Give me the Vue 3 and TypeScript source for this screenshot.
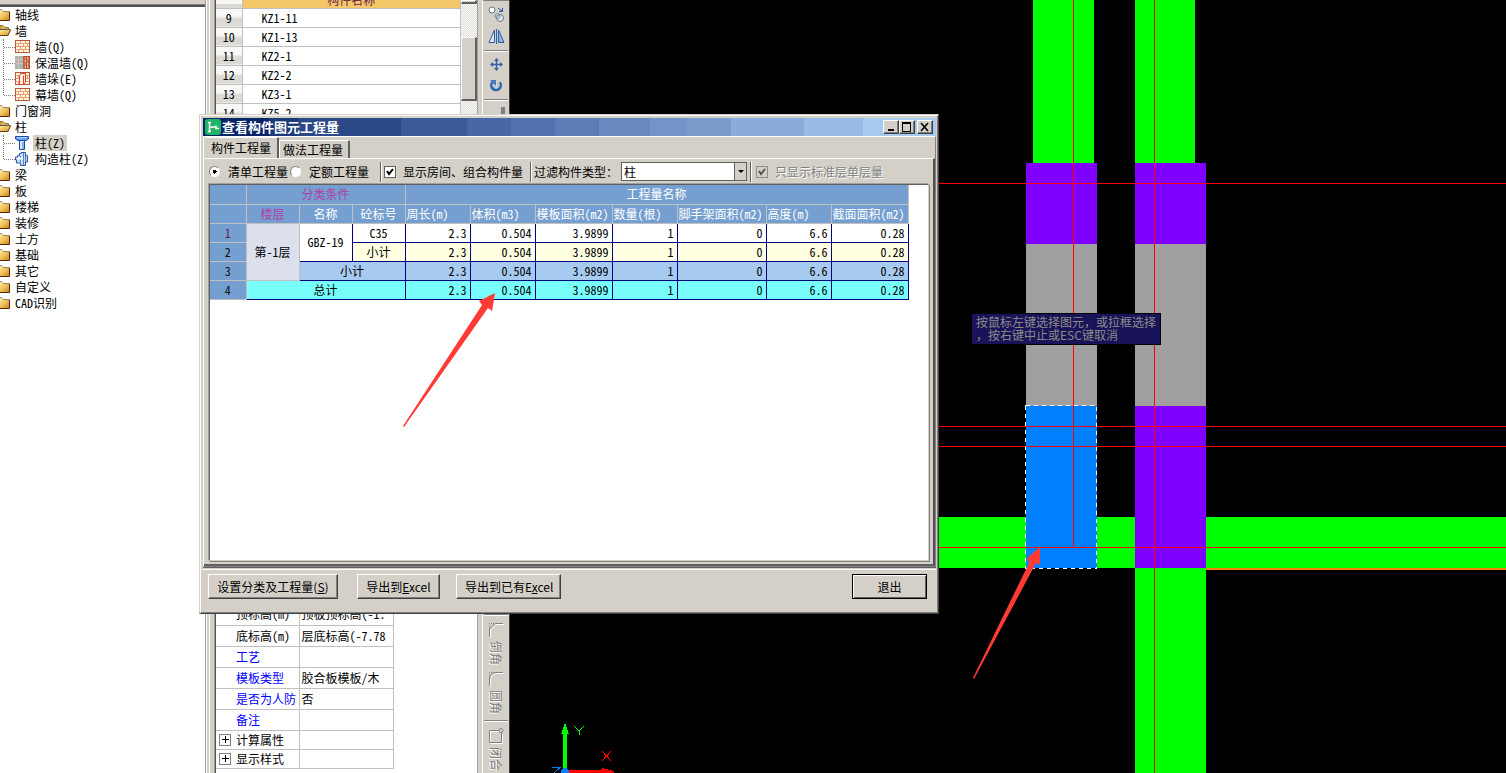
<script setup lang="ts">
interface TreeNode {
  label: string
  open?: boolean
  children?: { label: string; icon: string; selected?: boolean }[]
}

const tree: TreeNode[] = [
  { label: '轴线' },
  {
    label: '墙',
    open: true,
    children: [
      { label: '墙(Q)', icon: 'brick' },
      { label: '保温墙(Q)', icon: 'insulated' },
      { label: '墙垛(E)', icon: 'pier' },
      { label: '幕墙(Q)', icon: 'brick' },
    ],
  },
  { label: '门窗洞' },
  {
    label: '柱',
    open: true,
    children: [
      { label: '柱(Z)', icon: 'column', selected: true },
      { label: '构造柱(Z)', icon: 'tie' },
    ],
  },
  { label: '梁' },
  { label: '板' },
  { label: '楼梯' },
  { label: '装修' },
  { label: '土方' },
  { label: '基础' },
  { label: '其它' },
  { label: '自定义' },
  { label: 'CAD识别' },
]

const components = [
  { no: 9, name: 'KZ1-11' },
  { no: 10, name: 'KZ1-13' },
  { no: 11, name: 'KZ2-1' },
  { no: 12, name: 'KZ2-2' },
  { no: 13, name: 'KZ3-1' },
  { no: 14, name: 'KZ5-2' },
]

const props = [
  { name: '顶标高(m)', value: '顶板顶标高(-1.' },
  { name: '底标高(m)', value: '层底标高(-7.78' },
  { name: '工艺', value: '', blue: true },
  { name: '模板类型', value: '胶合板模板/木', blue: true },
  { name: '是否为人防', value: '否', blue: true },
  { name: '备注', value: '', blue: true },
  { name: '计算属性', value: '', group: true },
  { name: '显示样式', value: '', group: true },
]

const measures = ['周长(m)', '体积(m3)', '模板面积(m2)', '数量(根)', '脚手架面积(m2)', '高度(m)', '截面面积(m2)']
const values = ['2.3', '0.504', '3.9899', '1', '0', '6.6', '0.28']
const colWidths = [36, 53, 53, 53, 65, 65, 77, 65, 89, 65, 77]
</script>

<template>
  <div class="app">
    <aside class="tree">
      <div class="tree-cap"></div>
      <ul class="nodes">
        <li v-for="node in tree" :key="node.label">
          <div class="node">
            <svg class="folder" width="11" height="14" viewBox="0 0 11 14">
              <defs>
                <linearGradient id="gold" x1="0" y1="0" x2="1" y2="1">
                  <stop offset="0" stop-color="#fff0a0" />
                  <stop offset=".5" stop-color="#f0c058" />
                  <stop offset="1" stop-color="#c88020" />
                </linearGradient>
              </defs>
              <template v-if="node.open">
                <path d="M0 1.500H3L5 3.500H8.500V6H0Z" fill="#e0b050" stroke="#907840" />
                <path d="M0 5.500H11L8 11.500H0Z" fill="url(#gold)" />
                <path d="M0 5.500H10.500" stroke="#585858" />
                <path d="M10.500 6L8 11.500H0" fill="none" stroke="#604010" />
              </template>
              <template v-else>
                <path d="M0 1.500L2 3.500H10V12H0Z" fill="url(#gold)" />
                <path d="M0 1.500H1.500L3 3.500H9.500" fill="none" stroke="#908060" />
                <path d="M9.500 4V12.500H0" fill="none" stroke="#502808" />
              </template>
            </svg>
            <span>{{ node.label }}</span>
          </div>
          <ul v-if="node.children" class="children">
            <li v-for="child in node.children" :key="child.label" class="child">
              <svg width="16" height="14" viewBox="0 0 16 14">
                <g v-if="child.icon === 'column'">
                  <path d="M.5 .5H13.500V3L11 4.500H3L.5 3Z" fill="#6aa0f0" stroke="#1848a0" />
                  <path d="M4.500 4.500H9.500V13.500H4.500Z" fill="#d8ecff" stroke="#1848a0" />
                  <path d="M8 6V13" stroke="#3878d8" />
                  <path d="M2 1.500H12" stroke="#b0d0ff" />
                </g>
                <g v-else-if="child.icon === 'tie'">
                  <path d="M4.500 1.500H6V.5H10.500V3.500H12.500V10H10.500V13.500H5.500V11H1.500V8H.5V5H2.500V3.500H4.500Z" fill="#c8dcf8" stroke="#2858a8" />
                  <path d="M8.500 1V13M10.500 4V10M5.500 4V10" stroke="#5080c8" />
                  <path d="M3 6.500H8" stroke="#fff" stroke-width="2" />
                </g>
                <g v-else>
                  <rect x=".5" y=".5" width="14" height="12" fill="#fff4e0" stroke="#b85838" />
                  <path d="M1 3.500H14M1 6.500H14M1 9.500H14M5.500 1V3M10.500 1V3M3.500 4V6M8.500 4V6M12.500 4V6M5.500 7V9M10.500 7V9M3.500 10V12M8.500 10V12" stroke="#e8a070" />
                  <g v-if="child.icon === 'insulated'">
                    <rect width="9" height="13" fill="#a8b4b8" />
                    <path d="M0 3.500H8M0 7.500H8M3.500 0V12" stroke="#e8c0b0" />
                    <path d="M9 0V13M11.500 0V13M14 0V13" stroke="#b84828" stroke-width="1.500" />
                  </g>
                  <path v-if="child.icon === 'pier'" d="M4.500 3.500L6 1.500H10.500V10.500L8.500 12.500H4.500ZM8.500 3.500V12" fill="#fff0e8" stroke="#e04020" />
                </g>
              </svg>
              <span :class="{ selected: child.selected }">{{ child.label }}</span>
            </li>
          </ul>
        </li>
      </ul>
    </aside>
    <div class="splitter"></div>

    <main class="middle">
      <section class="list">
        <div class="list-rows">
          <table class="comp">
            <thead>
              <tr><th class="no"></th><th class="comp-title">构件名称</th></tr>
            </thead>
            <tbody>
              <tr v-for="c in components" :key="c.no">
                <th class="no" scope="row">{{ c.no }}</th>
                <td>{{ c.name }}</td>
              </tr>
            </tbody>
          </table>
        </div>
        <div class="scroll">
          <div class="scroll-up"></div>
          <div class="scroll-thumb"></div>
        </div>
      </section>
      <table class="props">
        <tbody>
          <tr v-for="p in props" :key="p.name" :class="{ group: p.group }">
            <th scope="row" :class="{ blue: p.blue }">
              <button v-if="p.group" class="expand" :aria-label="p.name">
                <svg width="7" height="7" viewBox="0 0 7 7"><path d="M0 3.500H7M3.500 0V7" stroke="#000" /></svg>
              </button>{{ p.name }}
            </th>
            <td>{{ p.value }}</td>
          </tr>
        </tbody>
      </table>
    </main>

    <nav class="tools">
      <div class="tools-top">
        <button aria-label="复制">
          <svg width="17" height="17" viewBox="0 0 17 17" fill="none">
            <circle cx="4" cy="4" r="3" stroke="#6a7888" fill="#fff" />
            <circle cx="12" cy="12" r="3.500" stroke="#6a7888" fill="#dde6f0" />
            <circle cx="9.500" cy="10" r="2.500" stroke="#7a8898" />
            <path d="M10 2L14 5M14.500 2V5.500H11" stroke="#2850a0" />
          </svg>
        </button>
        <button aria-label="镜像">
          <svg width="17" height="15" viewBox="0 0 17 15" fill="none" stroke="#2c5ca0">
            <path d="M6.500 1V13.500H1Z" fill="#d8e8f8" /><path d="M10.500 1V13.500H16Z" fill="#8cb4e0" /><path d="M8.500 0V15" />
          </svg>
        </button>
        <hr>
        <button aria-label="移动">
          <svg width="13" height="13" viewBox="0 0 13 13">
            <path d="M6.500 2V11M2 6.500H11" stroke="#3460a8" stroke-width="1.500" />
            <path d="M6.500 0L9 3H4ZM6.500 13L9 10H4ZM0 6.500L3 4V9ZM13 6.500L10 4V9Z" fill="#3460a8" />
          </svg>
        </button>
        <button aria-label="旋转">
          <svg width="14" height="16" viewBox="0 -2 14 16" fill="none">
            <path d="M3.500 3.500A4.500 4.500 0 1 0 10.500 3.500" stroke="#2c60b0" stroke-width="3" />
            <path d="M4 4.500A3.500 3.500 0 1 0 10 4" stroke="#90bcf0" />
            <path d="M1 1H7V7Z" fill="#4878c0" />
          </svg>
        </button>
        <hr>
        <i class="stub"></i>
      </div>
      <div class="tools-bottom">
        <hr>
        <button>
          <svg width="16" height="16" viewBox="0 0 16 16" fill="none">
            <path d="M2.500 16V8L8 2.500H16" stroke="#fff" /><path d="M1.500 15V7L7 1.500H15" stroke="#808080" /><path d="M1.500 6V1.500H7" stroke="#808080" stroke-dasharray="1 1" />
          </svg>
          <span>倒角</span>
        </button>
        <button>
          <svg width="16" height="16" viewBox="0 0 16 16" fill="none">
            <path d="M2.500 16V9Q3 3 9 2.500H16" stroke="#fff" /><path d="M1.500 15V8Q2 2 8 1.500H15" stroke="#808080" /><path d="M1.500 6V1.500H7" stroke="#808080" stroke-dasharray="1 1" />
          </svg>
          <span>圆角</span>
        </button>
        <hr>
        <button>
          <svg width="16" height="16" viewBox="0 0 16 16" fill="none">
            <path d="M12 3.500H2.500V15.500H14.500V6" stroke="#fff" /><path d="M11 2.500H1.500V14.500H13.500V5" stroke="#808080" /><circle cx="13" cy="2.500" r="2" stroke="#808080" />
          </svg>
          <span>闭合</span>
        </button>
      </div>
    </nav>

    <section class="canvas">
      <svg class="drawing" width="100%" height="100%">
        <g transform="translate(-510 0)" shape-rendering="crispEdges">
          <g fill="#00ff00">
            <rect x="1033" y="0" width="61" height="163" />
            <rect x="1135" y="0" width="60" height="163" />
            <rect x="510" y="517" width="100%" height="51" />
            <rect x="1135" y="568" width="71" height="100%" />
          </g>
          <rect x="1206" y="568" width="100%" height="2" fill="#ff8000" />
          <rect x="1026" y="163" width="71" height="81" fill="#8000ff" />
          <rect x="1135" y="163" width="71" height="81" fill="#8000ff" />
          <rect x="1026" y="244" width="71" height="162" fill="#a0a0a0" />
          <rect x="1135" y="244" width="71" height="162" fill="#a0a0a0" />
          <rect x="1026" y="406" width="71" height="162" fill="#0080ff" />
          <rect x="1135" y="406" width="71" height="162" fill="#8000ff" />
          <g fill="#ff0000">
            <rect x="510" y="183" width="100%" height="1" />
            <rect x="510" y="426" width="100%" height="1" />
            <rect x="510" y="446" width="100%" height="1" />
            <rect x="510" y="547" width="100%" height="1" />
            <rect x="1073" y="0" width="1" height="548" />
            <rect x="1154" y="0" width="1" height="100%" />
          </g>
          <path d="M1025.500 405.500H1096.500V568.500H1025.500Z" fill="none" stroke="#fff" stroke-dasharray="4 4" />
          <path d="M563 734H567V770H563ZM565 723L569 734H561Z" fill="#00ff00" />
          <path d="M567 770H602V768L614 771V773H567Z" fill="#ff0000" />
          <path d="M563 768H567L569 771V773H561V771Z" fill="#0080ff" />
          <path d="M574 726L579 731L584 726M579 731V735" fill="none" stroke="#00ff00" />
          <path d="M602 751L611 761M611 751L602 761" fill="none" stroke="#ff0000" />
          <path d="M552 767.500H560L554 773" fill="none" stroke="#0080ff" />
        </g>
      </svg>
    </section>

    <div class="hint">按鼠标左键选择图元，或拉框选择<br>，按右键中止或ESC键取消</div>

    <div class="dialog" role="dialog" aria-labelledby="dialog-title">
      <header class="titlebar">
        <svg class="logo" width="16" height="16" viewBox="0 0 16 16">
          <rect width="16" height="16" rx="3" fill="#20b464" />
          <path d="M3 3.500H6M3 12.500H6M4.500 3V13M4.500 8H11M11 6.500V9.500H14" fill="none" stroke="#fff" stroke-width="1.500" />
        </svg>
        <h1 id="dialog-title">查看构件图元工程量</h1>
        <div class="winbtns">
          <button aria-label="最小化"><svg width="12" height="10" viewBox="0 0 12 10"><path d="M3 8H9" stroke="#000" stroke-width="2" /></svg></button>
          <button aria-label="最大化"><svg width="12" height="10" viewBox="0 0 12 10"><path d="M1.500 1V9.500H9.500V1" fill="none" stroke="#000" /><path d="M1 1H10" stroke="#000" stroke-width="2" /></svg></button>
          <button class="close" aria-label="关闭"><svg width="12" height="10" viewBox="0 0 12 10"><path d="M2 1L9 9M9 1L2 9" stroke="#000" stroke-width="1.500" /></svg></button>
        </div>
      </header>

      <div class="body">
        <div class="tabs" role="tablist">
          <button class="tab active" role="tab" aria-selected="true">构件工程量</button>
          <button class="tab" role="tab" aria-selected="false">做法工程量</button>
        </div>
        <div class="page">
          <div class="filters">
            <label class="opt"><input type="radio" name="kind" checked><span>清单工程量</span></label>
            <label class="opt"><input type="radio" name="kind"><span>定额工程量</span></label>
            <i class="sep"></i>
            <label class="opt"><input type="checkbox" checked><span>显示房间、组合构件量</span></label>
            <i class="sep near"></i>
            <label for="ctype">过滤构件类型：</label>
            <div class="select">
              <select id="ctype"><option>柱</option></select>
              <i class="drop"></i>
            </div>
            <i class="sep"></i>
            <label class="opt disabled"><input type="checkbox" checked disabled><span>只显示标准层单层量</span></label>
          </div>

          <div class="grid">
            <table class="data">
              <colgroup>
                <col v-for="(w, i) in colWidths" :key="i" :style="{ width: w + 'px' }">
              </colgroup>
              <thead>
                <tr><th></th><th colspan="3" class="pink">分类条件</th><th colspan="7">工程量名称</th></tr>
                <tr>
                  <th></th><th class="pink">楼层</th><th>名称</th><th>砼标号</th>
                  <th v-for="m in measures" :key="m" class="left">{{ m }}</th>
                </tr>
              </thead>
              <tbody>
                <tr>
                  <th scope="row" class="current">1</th>
                  <td rowspan="3" class="floor">第-1层</td>
                  <td rowspan="2">GBZ-19</td>
                  <td>C35</td>
                  <td v-for="v in values" :key="v" class="num">{{ v }}</td>
                </tr>
                <tr class="sub">
                  <th scope="row">2</th>
                  <td>小计</td>
                  <td v-for="v in values" :key="v" class="num">{{ v }}</td>
                </tr>
                <tr class="sum">
                  <th scope="row">3</th>
                  <td colspan="2">小计</td>
                  <td v-for="v in values" :key="v" class="num">{{ v }}</td>
                </tr>
                <tr class="total">
                  <th scope="row">4</th>
                  <td colspan="3">总计</td>
                  <td v-for="v in values" :key="v" class="num">{{ v }}</td>
                </tr>
              </tbody>
            </table>
          </div>
        </div>
      </div>

      <footer class="actions">
        <button>设置分类及工程量(<u>S</u>)</button>
        <button>导出到<u>E</u>xcel</button>
        <button>导出到已有E<u>x</u>cel</button>
        <button class="exit">退出</button>
      </footer>
    </div>

    <svg class="marks" width="100%" height="100%" fill="#ff3b36">
      <path d="M403 426L482 305L479 301L495 293L492 311L488 308L404 427Z" />
      <path d="M973 678L1029 563L1027 558L1040 547V565L1036 563L974 679Z" />
    </svg>
  </div>
</template>

<style>
html,
body {
  margin: 0;
  overflow: hidden;
}
</style>

<style scoped>
.app {
  --face: #d4d0c8;
  position: relative;
  display: flex;
  height: 100vh;
  overflow: hidden;
  background: #fff;
  color: #000;
  font-family: "Noto Sans Mono CJK SC", "Noto Sans CJK SC", sans-serif;
  font-size: 12px;
  line-height: 16px;
}
.app * { box-sizing: border-box; }
button, select, input { font: inherit; color: inherit; margin: 0; }
button { padding: 0; border: 0; background: none; white-space: nowrap; }
svg { display: block; }
ul { list-style: none; margin: 0; padding: 0; }
table { border-collapse: collapse; table-layout: fixed; }
th { font-weight: normal; }
th, td { padding: 0; white-space: nowrap; overflow: hidden; }

/* navigation tree */
.tree { flex: 0 0 205px; overflow: hidden; }
.tree-cap { height: 7px; background: var(--face); border-bottom: 2px solid #505050; box-shadow: inset 0 -1px #808080; }
.node { display: flex; align-items: center; gap: 4px; height: 16px; }
.children { position: relative; }
.children::before {
  content: "";
  position: absolute;
  left: 3px;
  top: 0;
  bottom: 8px;
  border-left: 1px dotted #808080;
}
.child { display: flex; align-items: center; height: 16px; padding-left: 4px; }
.child::before { content: ""; width: 11px; border-top: 1px dotted #808080; }
.child svg { margin-right: 2px; }
.child span { padding: 0 2px; height: 16px; }
.child .selected { background: var(--face); }
.splitter {
  flex: 0 0 11px;
  border-left: 1px solid #a0a0a0;
  border-right: 1px solid #505050;
  background: linear-gradient(90deg, #fff 0 1px, var(--face) 1px 3px, #fff 3px 4px, var(--face) 4px 8px, #a0a0a0 8px);
}

/* component list and properties */
.middle { flex: 0 0 267px; display: flex; flex-direction: column; border-right: 1px solid #fff; box-shadow: inset -4px 0 var(--face), inset -5px 0 #a0a0a0; }
.list { flex: 0 0 604px; display: flex; overflow: hidden; }
.list-rows { flex: 0 0 245px; }
.comp { width: 100%; }
.comp tr { height: 19px; }
.comp thead tr { height: 8px; }
.comp thead th { height: 8px; padding: 0; }
.comp td, .comp th { border-right: 1px solid #c0c0c0; border-bottom: 1px solid #c0c0c0; height: 19px; }
.comp td { padding-left: 19px; padding-top: 1px; }
.comp .no { width: 26px; background: linear-gradient(#f8f8f6 0 45%, #dcdad4 55% 100%); }
.comp .comp-title { background: #f4c868; color: #6a1848; line-height: 0; vertical-align: top; }
.scroll { flex: 0 0 16px; background: repeating-conic-gradient(#fff 0 25%, #dedbd5 0 50%) 0 0 / 2px 2px; display: flex; flex-direction: column; gap: 33px; }
.scroll-up, .scroll-thumb { background: var(--face); border: 1px solid #fff; border-right: 2px solid #606060; border-bottom: 2px solid #606060; }
.scroll-up { height: 4px; }
.scroll-thumb { height: 64px; }
.props { width: 177px; }
.props tr { height: 21px; }
.props tr.group { height: 19px; }
.props th, .props td { border-right: 1px solid #c0c0c0; border-bottom: 1px solid #c0c0c0; text-align: left; line-height: 16px; }
.props th { width: 83px; padding-left: 20px; position: relative; }
.props td { width: 94px; padding-left: 2px; }
.props .blue { color: #0000ff; }
.expand { position: absolute; left: 3px; top: 3px; width: 12px; height: 12px; border: 1px solid #808080; display: grid; place-items: center; }

/* vertical toolbar */
.tools { flex: 0 0 27px; display: flex; flex-direction: column; background: var(--face); border-right: 1px solid #404040; }
.tools-top { flex: 0 0 614px; display: flex; flex-direction: column; align-items: center; gap: 6px; padding-top: 5px; border-top: 1px solid #808080; }
.tools hr { width: 24px; margin: 0; border: 0; border-top: 1px solid #808080; border-bottom: 1px solid #fff; }
.stub { width: 4px; height: 8px; background: #808080; align-self: flex-end; margin-right: 4px; }
.tools-bottom { display: flex; flex-direction: column; align-items: center; gap: 6px; }
.tools-bottom button { display: flex; flex-direction: column; align-items: center; gap: 3px; color: #808080; text-shadow: 1px 1px #fff; }
.tools-bottom button span { writing-mode: vertical-rl; text-orientation: sideways; line-height: 15px; }

/* drawing area */
.canvas { flex: 1; min-width: 0; background: #000; }
.hint {
  position: absolute;
  left: 972px;
  top: 313px;
  padding: 1px 4px 3px;
  background: #19145a;
  border: 0 solid #000;
  border-width: 1px 1px 1px 0;
  color: #8c8c84;
  font-family: "Noto Sans CJK SC", sans-serif;
  line-height: 13px;
}

/* quantities dialog */
.dialog {
  position: absolute;
  left: 199px;
  top: 114px;
  width: 740px;
  height: 500px;
  display: flex;
  flex-direction: column;
  padding: 2px;
  background: var(--face);
  border: 1px solid;
  border-color: var(--face) #404040 #404040 var(--face);
  box-shadow: inset 1px 1px #fff, inset -1px -1px #808080;
}
.titlebar {
  flex: 0 0 18px;
  display: flex;
  align-items: center;
  margin: 1px 0 0 1px;
  padding: 0 3px 0 2px;
  background: linear-gradient(90deg, #0a246a 0 9%, #1c3a7a 9% 13%, #2b4887 13% 27%, #3b5a99 27% 36%, #4867a6 36% 42%, #5271ae 42% 48%, #5c7cb6 48% 54%, #688abf 54% 61%, #7294c6 61% 66%, #7a9ccd 66% 72%, #8aabdb 72% 82%, #99bbe6 82% 90%, #a6caf0 90%);
  color: #fff;
}
.titlebar h1 { margin: 0 auto 0 1px; font-size: 13px; line-height: 16px; font-weight: 700; }
.winbtns { display: flex; }
.winbtns button {
  width: 16px;
  height: 14px;
  display: grid;
  place-items: center;
  background: var(--face);
  border: 1px solid;
  border-color: #fff #404040 #404040 #fff;
  box-shadow: inset -1px -1px #808080;
}
.winbtns .close { margin-left: 2px; }
.body { flex: 1; min-height: 0; display: flex; flex-direction: column; border: 1px solid; border-color: #fff #808080 #808080 #fff; margin-left: 1px; box-shadow: 0 1px #606060; }
.tabs { display: flex; align-items: flex-end; height: 21px; padding-left: 1px; }
.tab { height: 18px; padding: 0 5px 0 4px; border: 1px solid #fff; border-bottom: 0; border-right: 2px solid #606060; border-radius: 2px 2px 0 0; }
.tab + .tab { padding-left: 3px; }
.tab.active { height: 21px; padding: 0 6px; border-left: 0; }
.page { flex: 1; min-height: 0; display: flex; flex-direction: column; border-top: 1px solid #fff; border-right: 2px solid #505050; border-bottom: 2px solid #606060; }
.filters { display: flex; align-items: center; height: 25px; padding-left: 5px; white-space: nowrap; }
.opt { display: flex; align-items: center; }
input[type="radio"] { appearance: none; width: 11px; height: 11px; border: 1px solid; border-color: #808080 #fff #fff #808080; border-radius: 50%; background: #fff; margin-right: 8px; }
input[type="radio"]:checked { background: radial-gradient(circle, #000 0 2px, #fff 2px); }
.opt + .opt input[type="radio"] { margin-left: 2px; }
input[type="checkbox"] {
  appearance: none;
  width: 12px;
  height: 12px;
  border: 1px solid #606060;
  background: #fff url("data:image/svg+xml,%3Csvg xmlns='http://www.w3.org/2000/svg' viewBox='0 0 10 10'%3E%3Cpath d='M2 4l2 3 4-5' fill='none' stroke='black' stroke-width='2'/%3E%3C/svg%3E");
  margin-right: 7px;
}
input[type="checkbox"]:disabled { background-color: var(--face); opacity: 0.6; }
.sep { width: 2px; height: 20px; border-left: 1px solid #606060; border-right: 1px solid #fff; margin: 0 2px 0 11px; }
.sep.near { margin-left: 7px; }
.select { position: relative; flex: 0 0 126px; height: 19px; margin-left: 3px; border: 1px solid #606060; background: #fff; }
.select + .sep { margin-left: 3px; }
.sep + .disabled { margin-left: 2px; }
.select select { appearance: none; display: block; width: 100%; height: 17px; padding: 0 2px; border: 0; border-radius: 0; background: transparent; }
.drop { position: absolute; right: 0; top: 0; width: 12px; height: 17px; border-left: 1px solid #606060; background: var(--face); pointer-events: none; }
.drop::after { content: ""; position: absolute; left: 3px; top: 7px; border: 3px solid transparent; border-top-color: #000; border-bottom: 0; }
.disabled { color: #808080; text-shadow: 1px 1px #fff; }
.grid { flex: 1; min-height: 0; margin: 0 4px 3px 5px; background: #fff; border: 1px solid; border-color: #606060 var(--face) var(--face) #606060; box-shadow: -1px -1px #a0a0a0, 1px 1px #808080; }
.data { width: 698px; text-align: center; }
.data tr { height: 19px; }
.data th { background: #759fd0; border-right: 1px solid #c0c0c0; border-bottom: 1px solid #c0c0c0; color: #fff; height: 19px; line-height: 18px; }
.data tbody th { color: #101010; }
.data tbody .current { color: #6a1848; }
.data .pink { color: #b040a8; }
.data .left { text-align: left; padding-left: 1px; }
.data td { border-right: 1px solid #000080; border-bottom: 1px solid #000080; height: 19px; line-height: 18px; }
.data .num { text-align: right; padding-right: 3px; }
.data .floor { background: #dce0ec; border-color: #c0c0c0; }
.sub { background: #ffffe1; }
.sum { background: #a6caf0; }
.total { background: #78fffc; }
.actions { flex: 0 0 42px; display: flex; align-items: flex-start; padding: 4px 9px 0 6px; margin-top: 2px; border-top: 1px solid #fff; font-family: "Noto Sans CJK SC", sans-serif; }
.actions button {
  height: 25px;
  padding: 0 8px;
  background: var(--face);
  border: 1px solid;
  border-color: #fff #404040 #404040 #fff;
  box-shadow: inset -1px -1px #808080;
}
.actions button:nth-child(1) { width: 130px; margin-right: 19px; }
.actions button:nth-child(2) { width: 83px; margin-right: 16px; }
.actions button:nth-child(3) { width: 105px; }
.actions .exit { width: 75px; margin-left: auto; border-color: #000; box-shadow: inset 1px 1px #fff, inset -1px -1px #606060; }
.marks { position: absolute; inset: 0; pointer-events: none; }
</style>
